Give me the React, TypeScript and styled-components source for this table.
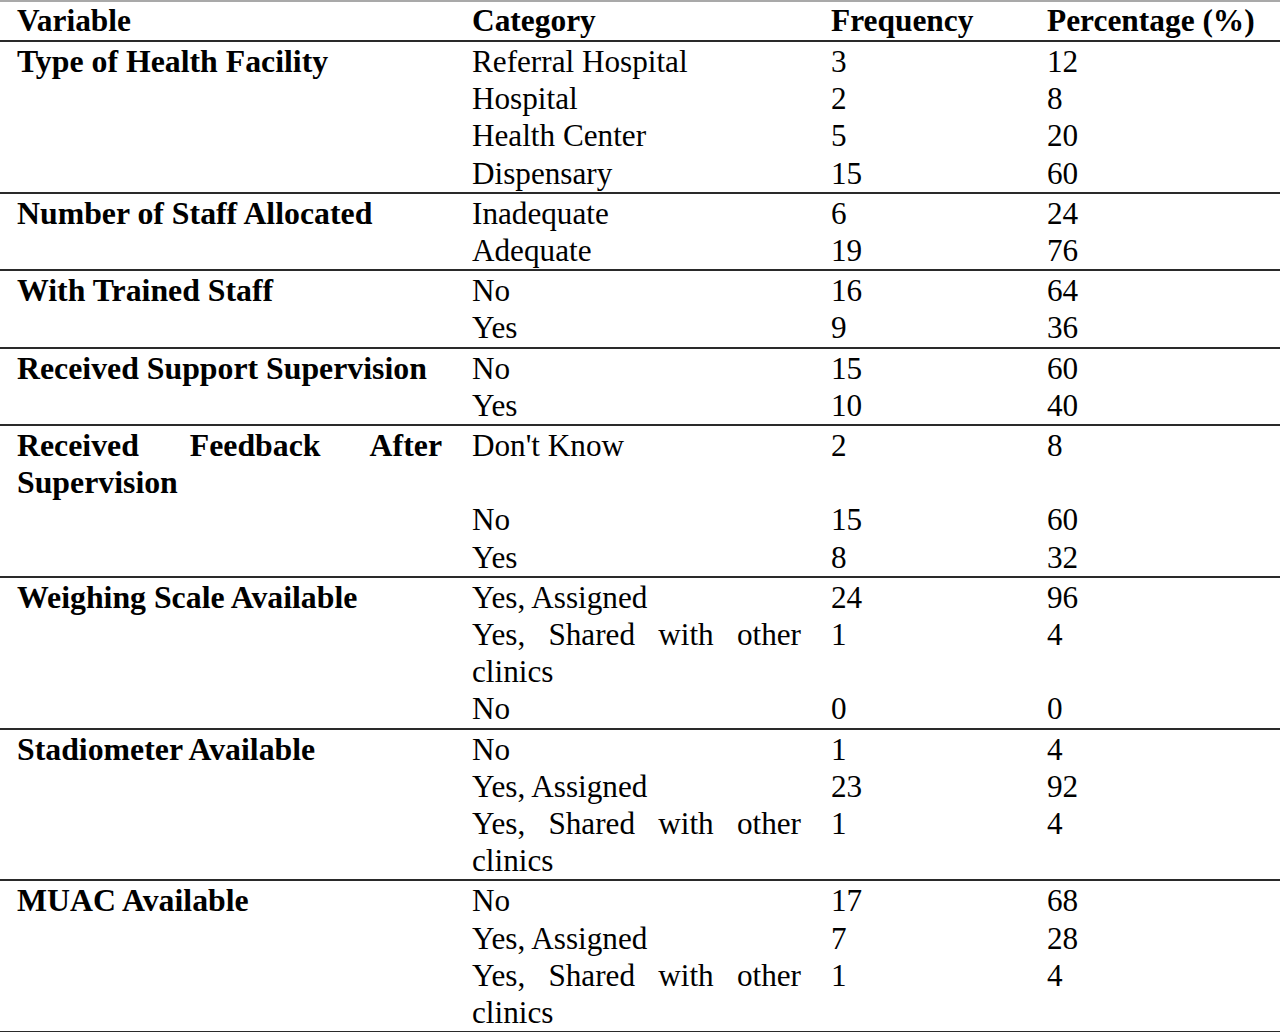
import React from "react";
import styled, { createGlobalStyle } from "styled-components";

const GlobalStyle = createGlobalStyle`
  html, body {
    margin: 0;
    padding: 0;
    background: #ffffff;
  }
  body {
    font-family: "Liberation Serif", "Times New Roman", serif;
    color: #000;
  }
`;

const Table = styled.table`
  width: 1280px;
  border-collapse: collapse;
  border-top: 2px solid #a9a9a9;
  font-family: "Liberation Serif", "Times New Roman", serif;
  font-size: 31.2px;
  line-height: 37.2px;
  table-layout: fixed;
`;

const Head = styled.thead`
  border-bottom: 2px solid #2a2a2a;
`;

const HeadCell = styled.th<{ $pl: number; $pr: number }>`
  padding: 0 ${(p) => p.$pr}px 0 ${(p) => p.$pl}px;
  text-align: left;
  font-weight: 700;
  font-size: 31.4px;
  height: 38px;
  vertical-align: middle;
  white-space: nowrap;
`;

const Section = styled.tbody`
  border-bottom: 2px solid #2a2a2a;
  & > tr:first-child > td {
    padding-top: 1px;
  }
`;

const Cell = styled.td<{ $pl: number; $pr: number; $bold?: boolean; $justify?: boolean }>`
  padding: 0 ${(p) => p.$pr}px 0 ${(p) => p.$pl}px;
  vertical-align: top;
  font-weight: ${(p) => (p.$bold ? 700 : 400)};
  font-size: ${(p) => (p.$bold ? "31.8px" : "31.2px")};
  text-align: ${(p) => (p.$justify ? "justify" : "left")};
  text-align-last: left;
`;

type Row = { cat: string; freq: string; pct: string };
type Group = { variable: string; rows: Row[] };

const groups: Group[] = [
  {
    variable: "Type of Health Facility",
    rows: [
      { cat: "Referral Hospital", freq: "3", pct: "12" },
      { cat: "Hospital", freq: "2", pct: "8" },
      { cat: "Health Center", freq: "5", pct: "20" },
      { cat: "Dispensary", freq: "15", pct: "60" },
    ],
  },
  {
    variable: "Number of Staff Allocated",
    rows: [
      { cat: "Inadequate", freq: "6", pct: "24" },
      { cat: "Adequate", freq: "19", pct: "76" },
    ],
  },
  {
    variable: "With Trained Staff",
    rows: [
      { cat: "No", freq: "16", pct: "64" },
      { cat: "Yes", freq: "9", pct: "36" },
    ],
  },
  {
    variable: "Received Support Supervision",
    rows: [
      { cat: "No", freq: "15", pct: "60" },
      { cat: "Yes", freq: "10", pct: "40" },
    ],
  },
  {
    variable: "Received Feedback After Supervision",
    rows: [
      { cat: "Don't Know", freq: "2", pct: "8" },
      { cat: "No", freq: "15", pct: "60" },
      { cat: "Yes", freq: "8", pct: "32" },
    ],
  },
  {
    variable: "Weighing Scale Available",
    rows: [
      { cat: "Yes, Assigned", freq: "24", pct: "96" },
      { cat: "Yes, Shared with other clinics", freq: "1", pct: "4" },
      { cat: "No", freq: "0", pct: "0" },
    ],
  },
  {
    variable: "Stadiometer Available",
    rows: [
      { cat: "No", freq: "1", pct: "4" },
      { cat: "Yes, Assigned", freq: "23", pct: "92" },
      { cat: "Yes, Shared with other clinics", freq: "1", pct: "4" },
    ],
  },
  {
    variable: "MUAC Available",
    rows: [
      { cat: "No", freq: "17", pct: "68" },
      { cat: "Yes, Assigned", freq: "7", pct: "28" },
      { cat: "Yes, Shared with other clinics", freq: "1", pct: "4" },
    ],
  },
];

export default function App() {
  return (
    <>
      <GlobalStyle />
      <Table>
        <colgroup>
          <col style={{ width: 457 }} />
          <col style={{ width: 359 }} />
          <col style={{ width: 216 }} />
          <col style={{ width: 248 }} />
        </colgroup>
        <Head>
          <tr>
            <HeadCell $pl={17} $pr={15}>Variable</HeadCell>
            <HeadCell $pl={15} $pr={15}>Category</HeadCell>
            <HeadCell $pl={15} $pr={5}>Frequency</HeadCell>
            <HeadCell $pl={15} $pr={5}>Percentage (%)</HeadCell>
          </tr>
        </Head>
        {groups.map((g) => (
          <Section key={g.variable}>
            {g.rows.map((r, i) => (
              <tr key={i}>
                <Cell $pl={17} $pr={15} $bold $justify>
                  {i === 0 ? g.variable : ""}
                </Cell>
                <Cell $pl={15} $pr={15} $justify>
                  {r.cat}
                </Cell>
                <Cell $pl={15} $pr={5}>{r.freq}</Cell>
                <Cell $pl={15} $pr={5}>{r.pct}</Cell>
              </tr>
            ))}
          </Section>
        ))}
      </Table>
    </>
  );
}
